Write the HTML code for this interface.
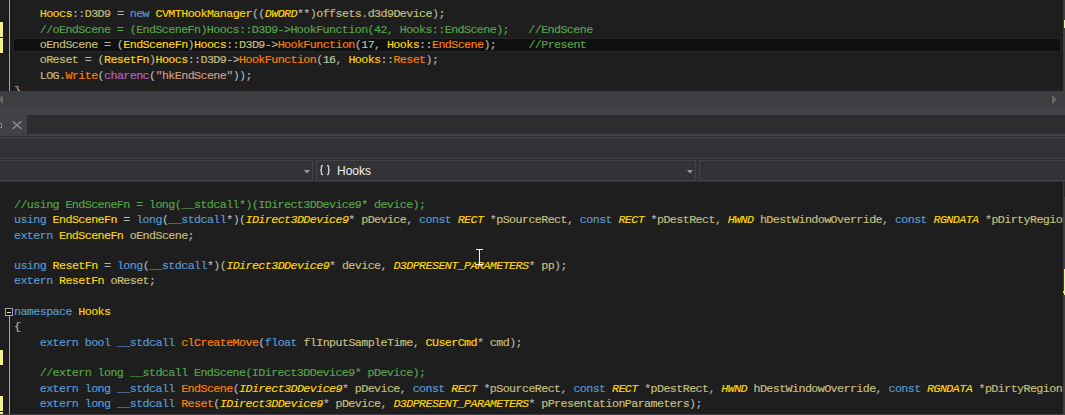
<!DOCTYPE html>
<html><head><meta charset="utf-8"><style>
*{margin:0;padding:0;box-sizing:border-box}
html,body{width:1065px;height:415px;overflow:hidden;background:#1e1e1e}
body{position:relative;font-family:"Liberation Mono",monospace}
.abs{position:absolute}
.ln{position:absolute;left:14.0px;height:15.31px;line-height:15.31px;font-size:11.7px;letter-spacing:-0.585px;white-space:pre;color:#b4b4b4;-webkit-text-stroke:0.15px currentColor}
.k{color:#569cd6}
.c{color:#57a64a}
.t{color:#ffd700}
.ti{color:#ffd700;font-style:italic}
.f{color:#ff8000}
.v{color:#c8c07c}
.p{color:#b4b4b4}
.n{color:#b5cea8}
.s{color:#d69d85}
.m{color:#bd63c5}
</style></head>
<body>
<!-- top editor -->
<div class="abs" style="left:0;top:0;width:1063px;height:91px;background:#1e1e1e;overflow:hidden">
  <div class="abs" style="left:0;top:22px;width:3px;height:15px;background:#efef90"></div>
  <div class="abs" style="left:0;top:38px;width:3px;height:15px;background:#efef90"></div>
  <div class="abs" style="left:9px;top:0;width:1px;height:91px;background:#a5a5a5"></div>
  <div class="abs" style="left:13px;top:38px;width:1048px;height:14px;border:1px solid #252525;background:#0f0f0f"></div>
  <div class="ln" style="top:6.83px">    <span class="t">Hoocs</span><span class="p">::</span><span class="v">D3D9</span><span class="p"> = </span><span class="k">new</span><span class="p"> </span><span class="t">CVMTHookManager</span><span class="p">((</span><span class="ti">DWORD</span><span class="p">**)</span><span class="v">offsets</span><span class="p">.</span><span class="v">d3d9Device</span><span class="p">);</span></div>
<div class="ln" style="top:22.83px">    <span class="c">//oEndScene = (EndSceneFn)Hoocs::D3D9-&gt;HookFunction(42, Hooks::EndScene);   //EndScene</span></div>
<div class="ln" style="top:37.83px">    <span class="v">oEndScene</span><span class="p"> = (</span><span class="t">EndSceneFn</span><span class="p">)</span><span class="t">Hoocs</span><span class="p">::</span><span class="v">D3D9</span><span class="p">-&gt;</span><span class="f">HookFunction</span><span class="p">(</span><span class="n">17</span><span class="p">, </span><span class="t">Hooks</span><span class="p">::</span><span class="f">EndScene</span><span class="p">);     </span><span class="c">//Present</span></div>
<div class="ln" style="top:52.83px">    <span class="v">oReset</span><span class="p"> = (</span><span class="t">ResetFn</span><span class="p">)</span><span class="t">Hoocs</span><span class="p">::</span><span class="v">D3D9</span><span class="p">-&gt;</span><span class="f">HookFunction</span><span class="p">(</span><span class="n">16</span><span class="p">, </span><span class="t">Hooks</span><span class="p">::</span><span class="f">Reset</span><span class="p">);</span></div>
<div class="ln" style="top:68.83px">    <span class="v">LOG</span><span class="p">.</span><span class="f">Write</span><span class="p">(</span><span class="m">charenc</span><span class="p">(</span><span class="s">&quot;hkEndScene&quot;</span><span class="p">));</span></div>
<div class="ln" style="top:83.83px"><span class="p">}</span></div>
</div>
<div class="abs" style="left:1063px;top:0;width:2px;height:91px;background:#3e3e42"></div>
<div class="abs" style="left:1064px;top:20px;width:1px;height:8px;background:#efef90"></div>

<!-- scrollbar + tab strip -->
<div class="abs" style="left:0;top:91px;width:1065px;height:45px;background:#3e3e42"></div>
<div class="abs" style="left:0;top:107px;width:1065px;height:29px;background:#404248"></div>
<svg class="abs" style="left:0;top:91px" width="1065" height="45">
  <polygon points="3,4 3,13 -2,8.5" fill="#686868"/>
  <polygon points="1052,4 1052,13 1057,8.5" fill="#686868"/>
  <path d="M12.6 30.2 L21.4 38 M21.4 30.2 L12.6 38" stroke="#8c8c8c" stroke-width="1.4"/>
  <rect x="-3" y="32.5" width="4.5" height="4" fill="#2d2d30" stroke="#8c8c8c" stroke-width="1"/>
</svg>
<div class="abs" style="left:27px;top:115px;width:1038px;height:19px;background:#2d2d30"></div>

<!-- toolbar band -->
<div class="abs" style="left:0;top:136px;width:1065px;height:1px;background:#2b2b2e"></div>
<div class="abs" style="left:0;top:137px;width:1065px;height:1px;background:#45454a"></div>
<div class="abs" style="left:0;top:138px;width:1065px;height:44px;background:#333337"></div>
<div class="abs" style="left:0;top:158px;width:1065px;height:1px;background:#434346"></div>
<div class="abs" style="left:0;top:159px;width:1065px;height:1px;background:#2d2d30"></div>

<!-- nav dropdowns -->
<div class="abs" style="left:-10px;top:160px;width:323px;height:21px;border:1px solid #434346;background:#333337"></div>
<div class="abs" style="left:316px;top:160px;width:380px;height:21px;border:1px solid #434346;background:#333337"></div>
<div class="abs" style="left:699px;top:160px;width:380px;height:21px;border:1px solid #434346;background:#333337"></div>
<svg class="abs" style="left:0;top:160px" width="1065" height="22">
  <polygon points="304,10 310,10 307,13.5" fill="#999"/>
  <polygon points="687,10 693,10 690,13.5" fill="#999"/>
</svg>
<svg class="abs" style="left:0;top:0" width="400" height="200"><path d="M323 165.6 H322.3 Q321.4 165.6 321.4 166.6 V168.9 Q321.4 169.9 320.3 170.1 Q321.4 170.3 321.4 171.3 V173.5 Q321.4 174.5 322.3 174.5 H323 M327 165.6 H327.7 Q328.6 165.6 328.6 166.6 V168.9 Q328.6 169.9 329.7 170.1 Q328.6 170.3 328.6 171.3 V173.5 Q328.6 174.5 327.7 174.5 H327" stroke="#d4d4d4" stroke-width="1.3" fill="none"/></svg>
<div class="abs" style="left:337px;top:161px;height:21px;line-height:21px;font-family:'Liberation Sans',sans-serif;font-size:12px;color:#f1f1f1;white-space:pre">Hooks</div>

<!-- bottom editor -->
<div class="abs" style="left:0;top:182px;width:1063px;height:232px;background:#1e1e1e;overflow:hidden">
</div>
<div class="abs" style="left:0;top:0;width:1063px;height:414px;overflow:hidden;clip-path:inset(182px 0 0 0)">
  <div class="abs" style="left:0;top:350px;width:3px;height:15px;background:#efef90"></div>
  <div class="abs" style="left:0;top:396px;width:3px;height:15px;background:#efef90"></div>
  <div class="abs" style="left:0;top:412px;width:3px;height:3px;background:#efef90"></div>
  <div class="abs" style="left:5px;top:308px;width:8px;height:8px;border:1px solid #a5a5a5;background:#141414"></div>
  <div class="abs" style="left:7px;top:312px;width:4px;height:1px;background:#e0e0e0"></div>
  <div class="abs" style="left:9px;top:316px;width:1px;height:100px;background:#a5a5a5"></div>
  <div class="ln" style="top:197.83px"><span class="c">//using EndSceneFn = long(__stdcall*)(IDirect3DDevice9* device);</span></div>
<div class="ln" style="top:212.83px"><span class="k">using</span><span class="p"> </span><span class="t">EndSceneFn</span><span class="p"> = </span><span class="k">long</span><span class="p">(</span><span class="k">__stdcall</span><span class="p">*)(</span><span class="ti">IDirect3DDevice9</span><span class="p">* </span><span class="v">pDevice</span><span class="p">, </span><span class="k">const</span><span class="p"> </span><span class="ti">RECT</span><span class="p"> *</span><span class="v">pSourceRect</span><span class="p">, </span><span class="k">const</span><span class="p"> </span><span class="ti">RECT</span><span class="p"> *</span><span class="v">pDestRect</span><span class="p">, </span><span class="ti">HWND</span><span class="p"> </span><span class="v">hDestWindowOverride</span><span class="p">, </span><span class="k">const</span><span class="p"> </span><span class="ti">RGNDATA</span><span class="p"> *</span><span class="v">pDirtyRegion</span><span class="p">);</span></div>
<div class="ln" style="top:228.83px"><span class="k">extern</span><span class="p"> </span><span class="t">EndSceneFn</span><span class="p"> </span><span class="v">oEndScene</span><span class="p">;</span></div>
<div class="ln" style="top:243.83px"></div>
<div class="ln" style="top:258.83px"><span class="k">using</span><span class="p"> </span><span class="t">ResetFn</span><span class="p"> = </span><span class="k">long</span><span class="p">(</span><span class="k">__stdcall</span><span class="p">*)(</span><span class="ti">IDirect3DDevice9</span><span class="p">* </span><span class="v">device</span><span class="p">, </span><span class="ti">D3DPRESENT_PARAMETERS</span><span class="p">* </span><span class="v">pp</span><span class="p">);</span></div>
<div class="ln" style="top:273.83px"><span class="k">extern</span><span class="p"> </span><span class="t">ResetFn</span><span class="p"> </span><span class="v">oReset</span><span class="p">;</span></div>
<div class="ln" style="top:289.83px"></div>
<div class="ln" style="top:304.83px"><span class="k">namespace</span><span class="p"> </span><span class="t">Hooks</span></div>
<div class="ln" style="top:319.83px"><span class="p">{</span></div>
<div class="ln" style="top:335.83px">    <span class="k">extern</span><span class="p"> </span><span class="k">bool</span><span class="p"> </span><span class="k">__stdcall</span><span class="p"> </span><span class="f">clCreateMove</span><span class="p">(</span><span class="k">float</span><span class="p"> </span><span class="v">flInputSampleTime</span><span class="p">, </span><span class="t">CUserCmd</span><span class="p">* </span><span class="v">cmd</span><span class="p">);</span></div>
<div class="ln" style="top:350.83px"></div>
<div class="ln" style="top:365.83px">    <span class="c">//extern long __stdcall EndScene(IDirect3DDevice9* pDevice);</span></div>
<div class="ln" style="top:381.83px">    <span class="k">extern</span><span class="p"> </span><span class="k">long</span><span class="p"> </span><span class="k">__stdcall</span><span class="p"> </span><span class="f">EndScene</span><span class="p">(</span><span class="ti">IDirect3DDevice9</span><span class="p">* </span><span class="v">pDevice</span><span class="p">, </span><span class="k">const</span><span class="p"> </span><span class="ti">RECT</span><span class="p"> *</span><span class="v">pSourceRect</span><span class="p">, </span><span class="k">const</span><span class="p"> </span><span class="ti">RECT</span><span class="p"> *</span><span class="v">pDestRect</span><span class="p">, </span><span class="ti">HWND</span><span class="p"> </span><span class="v">hDestWindowOverride</span><span class="p">, </span><span class="k">const</span><span class="p"> </span><span class="ti">RGNDATA</span><span class="p"> *</span><span class="v">pDirtyRegion</span><span class="p">);</span></div>
<div class="ln" style="top:396.83px">    <span class="k">extern</span><span class="p"> </span><span class="k">long</span><span class="p"> </span><span class="k">__stdcall</span><span class="p"> </span><span class="f">Reset</span><span class="p">(</span><span class="ti">IDirect3DDevice9</span><span class="p">* </span><span class="v">pDevice</span><span class="p">, </span><span class="ti">D3DPRESENT_PARAMETERS</span><span class="p">* </span><span class="v">pPresentationParameters</span><span class="p">);</span></div>
  <div class="abs" style="left:476px;top:249px;width:7px;height:1px;background:#f4f4f4"></div>
  <div class="abs" style="left:479px;top:250px;width:1px;height:14px;background:#f4f4f4"></div>
  <div class="abs" style="left:476px;top:264px;width:7px;height:1px;background:#f4f4f4"></div>
</div>
<div class="abs" style="left:1063px;top:182px;width:2px;height:233px;background:#3e3e42"></div>
<div class="abs" style="left:1064px;top:182px;width:1px;height:15px;background:#2a2a2d"></div>
<div class="abs" style="left:1064px;top:269px;width:1px;height:26px;background:#efef90"></div>
<div class="abs" style="left:1063px;top:291px;width:1px;height:2px;background:#d8d8d8"></div>
<div class="abs" style="left:0;top:414px;width:1065px;height:1px;background:#3e3e42"></div>
</body></html>
